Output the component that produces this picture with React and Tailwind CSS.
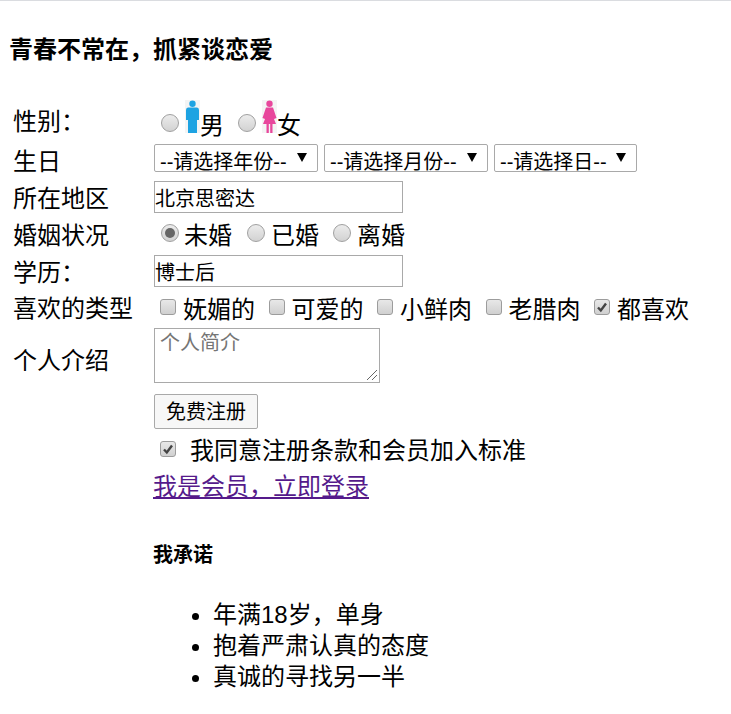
import React from "react";

const font = "font-['Liberation_Sans','Noto_Sans_CJK_SC',sans-serif]";

function Radio({ checked }) {
  return (
    <span className="relative inline-block w-[18px] h-[18px] rounded-full border border-[#a0a0a0] bg-gradient-to-b from-[#ececec] to-[#d2d2d2] shrink-0">
      {checked && <span className="absolute left-[3px] top-[3px] w-[10px] h-[10px] rounded-full bg-[#666666]"></span>}
    </span>
  );
}

function Check({ checked }) {
  return (
    <span className="inline-flex items-center justify-center w-[16px] h-[16px] rounded-[3px] border border-[#9c9c9c] bg-gradient-to-b from-[#e8e8e8] to-[#d0d0d0] shrink-0">
      {checked && (
        <svg width="12" height="12" viewBox="0 0 12 12">
          <path d="M2 6.5 L4.8 9.5 L10 2.5" fill="none" stroke="#444444" strokeWidth="2.4" />
        </svg>
      )}
    </span>
  );
}

function Man() {
  return (
    <svg width="15" height="33" viewBox="0 0 15 33" className="bg-[#f4f4f4] shrink-0">
      <circle cx="7.5" cy="3.8" r="3.2" fill="#1ea3e2" />
      <path d="M3 7.5 H12 Q14 7.5 14 10 V20 H12 V33 H3 V20 H1 V10 Q1 7.5 3 7.5 Z" fill="#1ea3e2" />
    </svg>
  );
}

function Woman() {
  return (
    <svg width="15" height="33" viewBox="0 0 15 33" className="bg-[#f4f4f4] shrink-0">
      <circle cx="7.5" cy="3.8" r="3.2" fill="#e8479c" />
      <path d="M4 7.5 H11 L14.5 18 L12 19 L14 24 H10.5 V33 H8.2 V24 H6.8 V33 H4.5 V24 H1 L3 19 L0.5 18 Z" fill="#e8479c" />
    </svg>
  );
}

function Select({ label, width }) {
  return (
    <div className={`relative h-[28px] ${width} border border-[#a9a9a9] rounded-[2px] shrink-0`}>
      <span className="absolute left-[5px] top-[5px] text-[20px] leading-[24px] whitespace-nowrap">{label}</span>
      <svg width="10" height="9" viewBox="0 0 10 9" className="absolute top-[8px] right-[10px]">
        <path d="M0 0 H10 L5 9 Z" fill="#000000" />
      </svg>
    </div>
  );
}

function Row({ label, height, children, labelClass = "" }) {
  return (
    <div className={`flex ${height}`}>
      <div className={`w-[141px] ml-[-1px] shrink-0 text-[24px] leading-[32px] ${labelClass}`}>{label}</div>
      <div className="flex-1 min-w-0">{children}</div>
    </div>
  );
}

export default function App() {
  const types = [
    ["妩媚的", false],
    ["可爱的", false],
    ["小鲜肉", false],
    ["老腊肉", false],
    ["都喜欢", true],
  ];

  return (
    <div className={`${font} h-[714px] overflow-hidden bg-white text-black border-t border-[#dadce0]`}>
      <h2 className="pl-[9px] pt-[33px] text-[24px] leading-[32px] font-bold h-[96px]">{"青春不常在\uFF0C抓紧谈恋爱"}</h2>

      <div className="pl-[14px]">
        <Row label={"性别\uFF1A"} height="h-[47px]" labelClass="pt-[9px]">
          <div className="flex items-end h-[44px] pl-[7px] text-[24px] leading-[30px]">
            <span className="mb-[2px] mr-[6px]"><Radio /></span>
            <span className="mb-[8px]"><Man /></span>
            <span>男</span>
            <span className="mb-[2px] ml-[14px] mr-[6px]"><Radio /></span>
            <span className="mb-[8px]"><Woman /></span>
            <span>女</span>
          </div>
        </Row>

        <Row label="生日" height="h-[37px]" labelClass="mt-[2px]">
          <div className="flex gap-[6px]">
            <Select label="--请选择年份--" width="w-[164px]" />
            <Select label="--请选择月份--" width="w-[164px]" />
            <Select label="--请选择日--" width="w-[143px]" />
          </div>
        </Row>

        <Row label="所在地区" height="h-[36px]" labelClass="mt-[2px]">
          <div className="w-[249px] h-[32px] border border-[#a9a9a9] text-[20px] leading-[35px]">北京思密达</div>
        </Row>

        <Row label="婚姻状况" height="h-[38px]" labelClass="mt-[3px]">
          <div className="flex items-center h-[36px] pl-[7px] text-[24px]">
            <span className="mt-[-2px]"><Radio checked /></span>
            <span className="ml-[5px] mt-[2px]">未婚</span>
            <span className="ml-[15px] mt-[-2px]"><Radio /></span>
            <span className="ml-[6px] mt-[2px]">已婚</span>
            <span className="ml-[14px] mt-[-2px]"><Radio /></span>
            <span className="ml-[6px] mt-[2px]">离婚</span>
          </div>
        </Row>

        <Row label={"学历\uFF1A"} height="h-[37px]" labelClass="mt-[2px]">
          <div className="w-[249px] h-[32px] border border-[#a9a9a9] text-[20px] leading-[35px]">博士后</div>
        </Row>

        <Row label="喜欢的类型" height="h-[36px]" labelClass="mt-[1px]">
          <div className="flex items-center h-[33px] pl-[6px] text-[24px] gap-[13.5px]">
            {types.map(([name, checked]) => (
              <span key={name} className="flex items-center gap-[7px]">
                <span className="mt-[-4px] flex"><Check checked={checked} /></span>
                <span className="mt-[2px]">{name}</span>
              </span>
            ))}
          </div>
        </Row>

        <Row label="个人介绍" height="h-[66px]" labelClass="pt-[17px]">
          <div className="relative w-[226px] h-[55px] border border-[#a9a9a9] pl-[5px] text-[20px] leading-[28px] text-[#757575]">
            个人简介
            <svg width="12" height="12" viewBox="0 0 12 12" className="absolute right-[1px] bottom-[1px]">
              <path d="M1 11 L11 1 M6 11 L11 6" stroke="#666666" strokeWidth="1" />
            </svg>
          </div>
        </Row>

        <div className="pl-[140px] text-[24px]">
          <div className="w-[104px] h-[35px] border border-[#a9a9a9] rounded-[2px] bg-[#f7f7f7] text-center text-[20px] leading-[34px]">免费注册</div>
          <div className="flex items-center h-[41px] pl-[6px]">
            <span className="mt-[-2px] flex"><Check checked /></span>
            <span className="ml-[14px] mt-[2px]">我同意注册条款和会员加入标准</span>
          </div>
          <a href="#" className="block h-[32px] ml-[-1px] leading-[34px] text-[#551a8b] underline">{"我是会员\uFF0C立即登录"}</a>
          <h4 className="mt-[39px] text-[20px] leading-[28px] font-bold ml-[-1px]">我承诺</h4>
          <ul className="mt-[30px] pl-[59px] list-disc leading-[31px]">
            <li>{"年满18岁\uFF0C单身"}</li>
            <li>抱着严肃认真的态度</li>
            <li>真诚的寻找另一半</li>
          </ul>
        </div>
      </div>
    </div>
  );
}
